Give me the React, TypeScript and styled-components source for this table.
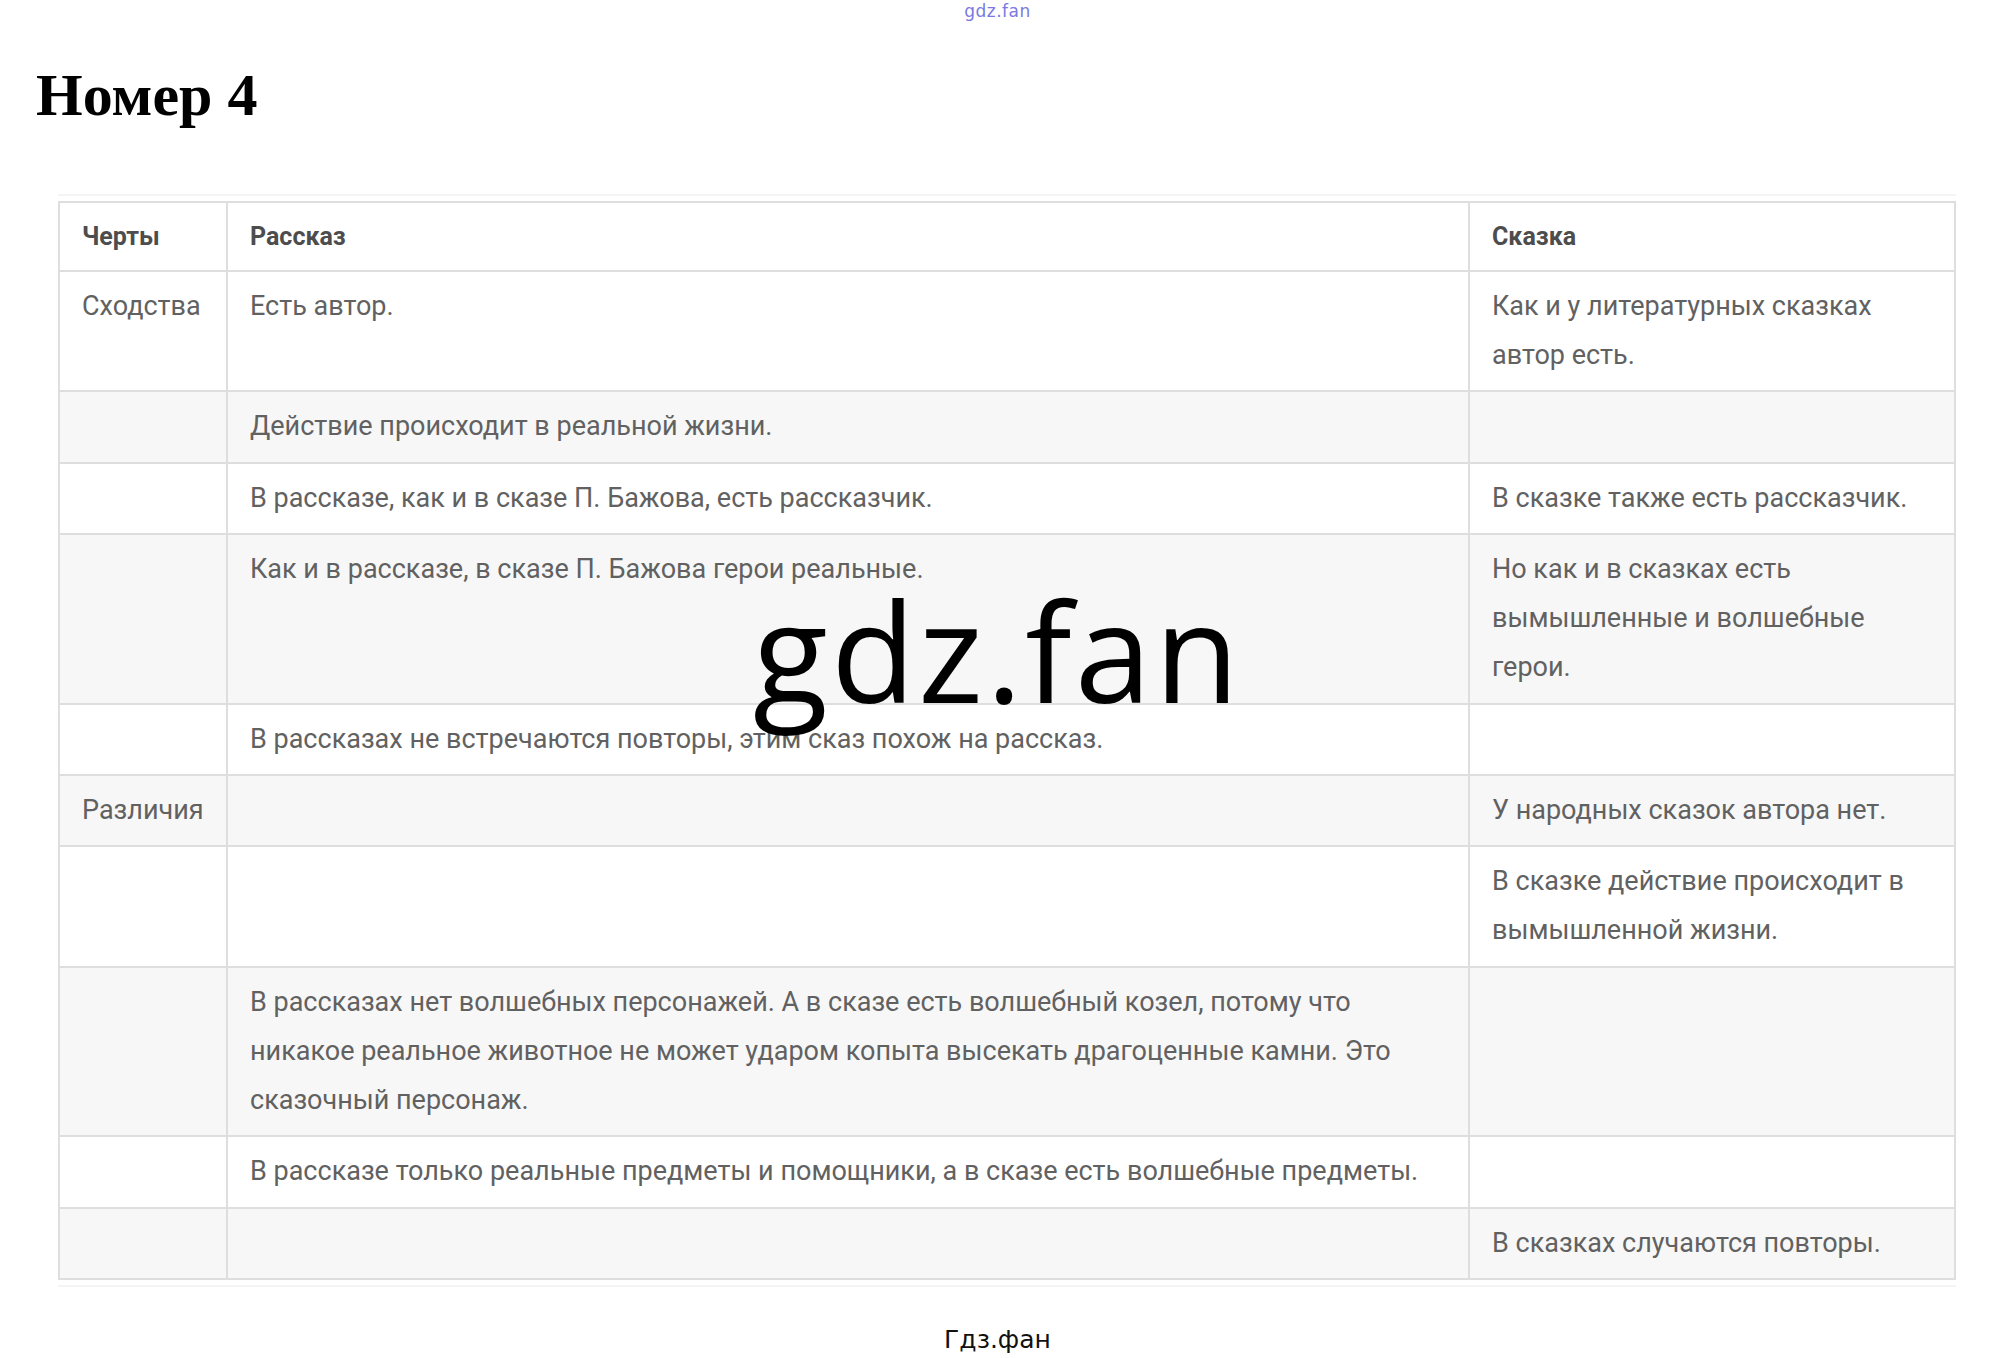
import React from "react";
import styled, { createGlobalStyle } from "styled-components";

const GlobalStyle = createGlobalStyle`
  html, body {
    margin: 0;
    padding: 0;
    background: #ffffff;
  }
  body {
    font-family: "Roboto", "Liberation Sans", sans-serif;
  }
`;

const Page = styled.div`
  position: relative;
  width: 1995px;
  min-height: 1358px;
  display: flex;
  flex-direction: column;
`;

const TopMark = styled.div`
  height: 22px;
  line-height: 22px;
  text-align: center;
  font-family: "DejaVu Sans", sans-serif;
  font-size: 17px;
  color: #7a7ae0;
  letter-spacing: 0.5px;
`;

const Title = styled.h1`
  margin: 43px 0 0 36px;
  font-family: "Liberation Serif", "Times New Roman", serif;
  font-weight: 700;
  font-size: 60px;
  line-height: 60px;
  color: #000000;
`;

const TableWrap = styled.div`
  margin: 69px 39px 0 58px;
  padding: 5px 0;
  border-top: 2px solid #f4f4f4;
  border-bottom: 2px solid #f4f4f4;
`;

const Table = styled.table`
  width: 100%;
  border-collapse: collapse;
  table-layout: fixed;
  font-family: "Roboto", "Liberation Sans", sans-serif;
  font-size: 27px;
  color: #616161;
`;

const Row = styled.tr<{ $striped?: boolean }>`
  background: ${(p) => (p.$striped ? "#f7f7f7" : "#ffffff")};
`;

const Cell = styled.td`
  border: 2px solid #dedede;
  padding: 10px 6px 10.4px 22px;
  line-height: 49px;
  vertical-align: top;
  white-space: pre-line;
`;

const HeadCell = styled.th`
  border: 2px solid #dedede;
  padding: 9px 6px 9px 22px;
  line-height: 49px;
  text-align: left;
  font-weight: 700;
  font-size: 25px;
  color: #4d4d4d;
`;

const Watermark = styled.div`
  position: absolute;
  left: 0;
  right: 0;
  top: 580px;
  text-align: center;
  font-family: "Open Sans", sans-serif;
  font-size: 138px;
  letter-spacing: 3px;
  line-height: 1;
  color: #000000;
  pointer-events: none;
`;

const Footer = styled.div`
  margin-top: 38px;
  text-align: center;
  font-family: "DejaVu Sans", "Liberation Sans", sans-serif;
  font-size: 25px;
  line-height: 30px;
  color: #111111;
`;

const rows: [string, string, string][] = [
  ["Сходства", "Есть автор.", "Как и у литературных сказках\nавтор есть."],
  ["", "Действие происходит в реальной жизни.", ""],
  ["", "В рассказе, как и в сказе П. Бажова, есть рассказчик.", "В сказке также есть рассказчик."],
  ["", "Как и в рассказе, в сказе П. Бажова герои реальные.", "Но как и в сказках есть\nвымышленные и волшебные\nгерои."],
  ["", "В рассказах не встречаются повторы, этим сказ похож на рассказ.", ""],
  ["Различия", "", "У народных сказок автора нет."],
  ["", "", "В сказке действие происходит в\nвымышленной жизни."],
  [
    "",
    "В рассказах нет волшебных персонажей. А в сказе есть волшебный козел, потому что\nникакое реальное животное не может ударом копыта высекать драгоценные камни. Это\nсказочный персонаж.",
    "",
  ],
  ["", "В рассказе только реальные предметы и помощники, а в сказе есть волшебные предметы.", ""],
  ["", "", "В сказках случаются повторы."],
];

export default function App() {
  return (
    <>
      <GlobalStyle />
      <Page>
        <TopMark>gdz.fan</TopMark>
        <Title>Номер 4</Title>
        <TableWrap>
          <Table>
            <colgroup>
              <col style={{ width: 168 }} />
              <col style={{ width: 1242 }} />
              <col />
            </colgroup>
            <thead>
              <Row>
                <HeadCell>Черты</HeadCell>
                <HeadCell>Рассказ</HeadCell>
                <HeadCell>Сказка</HeadCell>
              </Row>
            </thead>
            <tbody>
              {rows.map((r, i) => (
                <Row key={i} $striped={i % 2 === 1}>
                  <Cell>{r[0]}</Cell>
                  <Cell>{r[1]}</Cell>
                  <Cell>{r[2]}</Cell>
                </Row>
              ))}
            </tbody>
          </Table>
        </TableWrap>
        <Footer>Гдз.фан</Footer>
        <Watermark>gdz.fan</Watermark>
      </Page>
    </>
  );
}
